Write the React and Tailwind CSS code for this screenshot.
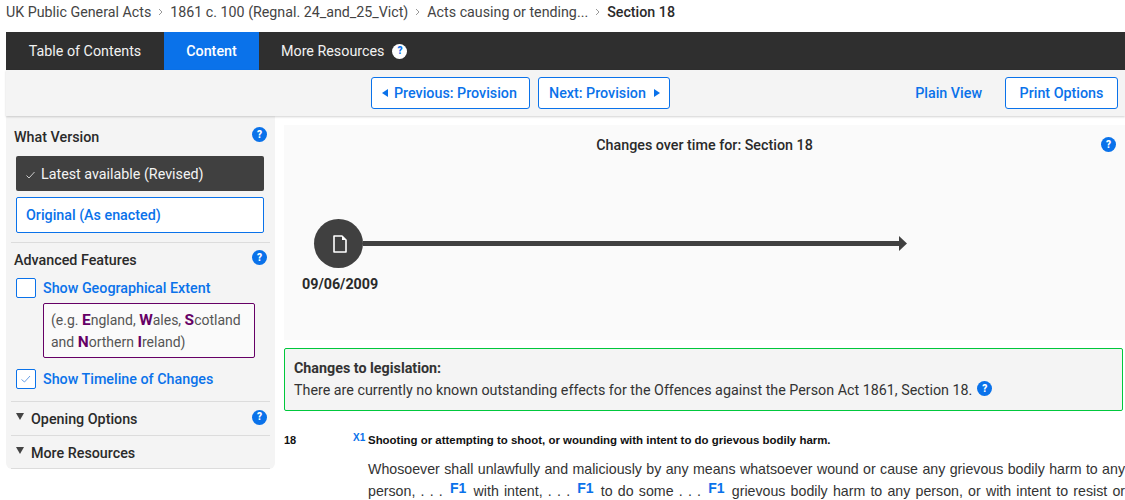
const roboto = { fontFamily: 'Roboto, sans-serif' };

function Help({ className = '', light }) {
    return (
        <span className={`inline-flex items-center justify-center rounded-full w-[15px] h-[15px] text-[10px] font-black leading-none ${light ? 'bg-white text-[#0a72ea]' : 'bg-[#0a72ea] text-white'} ${className}`}>
            ?
        </span>
    );
}

function Crumb({ children, last }) {
    return (
        <>
            <span className={last ? 'text-[#2a2a2a] font-medium' : ''}>{children}</span>
            {!last && (
                <svg width="5" height="8" viewBox="0 0 5 8" className="mx-[7px]">
                    <path d="M1 1l3 3-3 3" fill="none" stroke="#999" strokeWidth="1" />
                </svg>
            )}
        </>
    );
}

function Triangle({ dir }) {
    return (
        <svg width="6" height="8" viewBox="0 0 6 8" className="mt-[-2px]">
            <path d={dir === 'left' ? 'M6 0v8L0 4z' : 'M0 0v8l6-4z'} fill="#0a72ea" />
        </svg>
    );
}

function Divider() {
    return <div className="h-px bg-[#dcdcdc] mx-[5px]" />;
}

function Caret() {
    return (
        <svg width="8" height="7" viewBox="0 0 8 7" className="mr-[7px] relative top-[-3px]">
            <path d="M0 0h8L4 7z" fill="#444" />
        </svg>
    );
}

function Note({ children }) {
    return <span className="font-bold text-[#0a72ea] text-[14px] relative top-[-3px] mx-[2px]">{children}</span>;
}

function Region({ children }) {
    return <b className="text-[#660066] text-[15.5px]">{children}</b>;
}

export default function App() {
    return (
        <div className="h-[500px] w-[1125px] overflow-hidden bg-white text-[#333] text-[14.3px]" style={roboto}>
            {/* Breadcrumb */}
            <div className="h-[32px] pl-[6px] pt-[3px] flex items-start text-[#444] text-[14.25px] leading-[18px]">
                <div className="flex items-center h-[18px]">
                    <Crumb>UK Public General Acts</Crumb>
                    <Crumb>1861 c. 100 (Regnal. 24_and_25_Vict)</Crumb>
                    <Crumb>Acts causing or tending...</Crumb>
                    <Crumb last>Section 18</Crumb>
                </div>
            </div>

            {/* Tabs */}
            <div className="ml-[6px] h-[38px] bg-[#2f2f2f] flex items-stretch text-white">
                <div className="w-[158px] pt-[2px] flex items-center justify-center text-[#f2f2f2]">Table of Contents</div>
                <div className="relative w-[95px] pt-[2px] flex items-center justify-center bg-[#0a72ea] font-medium">
                    Content
                    <span className="absolute left-1/2 -translate-x-1/2 top-full border-x-[5px] border-x-transparent border-t-[5px] border-t-[#0a72ea]" />
                </div>
                <div className="flex items-center pl-[22px] gap-[8px] text-[#f2f2f2]">
                    <span className="pt-[2px]">More Resources</span> <Help light />
                </div>
            </div>

            {/* Toolbar */}
            <div className="ml-[6px] h-[46px] bg-[#f4f4f4] shadow-[0_1px_2px_rgba(0,0,0,0.18)] relative flex items-start pt-[7px] text-[#0a72ea] font-medium">
                <div className="ml-[365px] flex gap-[8px]">
                    <div className="h-[32px] w-[159px] pt-[2px] bg-white border border-[#0a72ea] rounded-[3px] flex items-center pl-[10px] gap-[6px]">
                        <Triangle dir="left" /> Previous: Provision
                    </div>
                    <div className="h-[32px] w-[132px] pt-[2px] bg-white border border-[#0a72ea] rounded-[3px] flex items-center pl-[10px] gap-[8px]">
                        Next: Provision <Triangle dir="right" />
                    </div>
                </div>
                <div className="ml-auto mr-[7px] flex items-center gap-[23px]">
                    <span className="pt-[2px]">Plain View</span>
                    <div className="h-[32px] w-[113px] pt-[2px] bg-white border border-[#0a72ea] rounded-[3px] flex items-center justify-center">Print Options</div>
                </div>
            </div>

            <div className="flex items-start ml-[6px]">
                {/* Sidebar */}
                <div className="w-[269px] h-[353px] bg-[#f4f4f4] rounded-b-[6px] shrink-0 text-[#2a2a2a]">
                    <div className="flex justify-between items-start px-[8px] pt-[11px] h-[40px] font-medium">
                        <span className="leading-[18px] pt-[1px]">What Version</span>
                        <Help />
                    </div>
                    <div className="ml-[10px] mr-[11px] h-[35px] pt-[2px] bg-[#404040] rounded-[2px] text-[#f4f4f4] flex items-center pl-[10px]">
                        <svg width="9" height="8" viewBox="0 0 9 8" className="mr-[6px]">
                            <path d="M0.5 4.5L3 7l5.5-6" fill="none" stroke="#ccc" strokeWidth="1" />
                        </svg>
                        Latest available (Revised)
                    </div>
                    <div className="ml-[10px] mr-[11px] mt-[6px] h-[36px] pt-[2px] bg-white border border-[#0a72ea] rounded-[2px] text-[#0a72ea] font-medium flex items-center pl-[9px]">
                        Original (As enacted)
                    </div>
                    <div className="mt-[9px]"><Divider /></div>
                    <div className="flex justify-between items-start px-[8px] pt-[7px] h-[25px] font-medium">
                        <span className="leading-[18px] pt-[1px]">Advanced Features</span>
                        <Help />
                    </div>
                    <div className="flex items-center ml-[10px] mt-[10px] h-[20px] text-[#0a72ea] font-medium">
                        <span className="w-[20px] h-[20px] bg-white border border-[#0a72ea] rounded-[2px] mr-[7px]" />
                        <span className="pt-[2px]">Show Geographical Extent</span>
                    </div>
                    <div className="ml-[37px] mt-[5px] w-[212px] h-[55px] border border-[#660066] rounded-[2px] bg-[#fafafa] pl-[7px] pt-[5px] leading-[22px] text-[#555] text-[14px]">
                        (e.g. <Region>E</Region>ngland, <Region>W</Region>ales, <Region>S</Region>cotland
                        <br />and <Region>N</Region>orthern <Region>I</Region>reland)
                    </div>
                    <div className="flex items-center ml-[10px] mt-[11px] h-[20px] text-[#0a72ea] font-medium">
                        <span className="w-[20px] h-[20px] bg-white border border-[#0a72ea] rounded-[2px] mr-[7px] flex items-center justify-center">
                            <svg width="10" height="8" viewBox="0 0 10 8">
                                <path d="M0.5 4.5L3.5 7L9 1" fill="none" stroke="#6a9fe6" strokeWidth="1" />
                            </svg>
                        </span>
                        <span className="pt-[2px]">Show Timeline of Changes</span>
                    </div>
                    <div className="mt-[12px]"><Divider /></div>
                    <div className="flex items-center justify-between pl-[10px] pr-[8px] h-[33px] font-medium">
                        <span className="flex items-center pt-[2px]"><Caret />Opening Options</span>
                        <Help className="mt-[-3px]" />
                    </div>
                    <Divider />
                    <div className="flex items-center pl-[10px] pt-[3px] h-[32px] font-medium">
                        <Caret />More Resources
                    </div>
                    <Divider />
                </div>

                {/* Main */}
                <div className="ml-[9px] w-[841px] shrink-0">
                    <div className="mt-[9px] h-[215px] bg-[#fafafa] relative pt-[12px]">
                        <div className="text-center font-medium text-[#2a2a2a] leading-[16px]">Changes over time for: Section 18</div>
                        <Help className="absolute right-[9px] top-[12px] w-[14px] h-[14px]" />
                        <div className="flex items-center ml-[30px] mt-[66px]">
                            <div className="w-[49px] h-[49px] rounded-full bg-[#404040] flex items-center justify-center shrink-0">
                                <svg width="14" height="18" viewBox="0 0 14 18" className="ml-[3px]">
                                    <path d="M1 1h8l4 4v12H1z" fill="none" stroke="#fff" strokeWidth="1.6" strokeLinejoin="round" />
                                    <path d="M9 1l4 4H9z" fill="#fff" />
                                </svg>
                            </div>
                            <div className="w-[536px] h-[5px] bg-[#404040]" />
                            <svg width="8" height="15" viewBox="0 0 8 15"><path d="M0 0l8 7.5L0 15z" fill="#404040" /></svg>
                        </div>
                        <div className="ml-[18px] mt-[6px] font-bold text-[#2a2a2a]">09/06/2009</div>
                    </div>

                    <div className="mt-[8px] w-[839px] h-[63px] border border-[#00c83c] rounded-[2px] bg-[#f4f4f4] pl-[9px] pt-[9px] leading-[22px] text-[#333]">
                        <div className="font-bold leading-[20px]">Changes to legislation:</div>
                        <div className="flex items-center mt-[1px]">
                            There are currently no known outstanding effects for the Offences against the Person Act 1861, Section 18.
                            <Help className="ml-[5px] mt-[-3px] w-[14px] h-[14px]" />
                        </div>
                    </div>

                    <div style={{ fontFamily: '"Liberation Sans", Arial, sans-serif' }}>
                        <div className="flex items-start mt-[21px] h-[18px]">
                            <span className="w-[69px] font-bold text-[11px] text-[#111] leading-[16px]">18</span>
                            <span className="w-[15px] font-bold text-[#0a72ea] text-[10px] leading-[12px]">X1</span>
                            <span className="font-bold text-[11.45px] text-[#111] leading-[16px]">Shooting or attempting to shoot, or wounding with intent to do grievous bodily harm.</span>
                        </div>
                        <div className="ml-[84px] mt-[8px] text-[14.2px] leading-[22px] text-[#333]">
                            <div className="[text-align-last:justify]">Whosoever shall unlawfully and maliciously by any means whatsoever wound or cause any grievous bodily harm to any</div>
                            <div className="[text-align-last:justify]">person, . . . <Note>F1</Note> with intent, . . . <Note>F1</Note> to do some . . . <Note>F1</Note> grievous bodily harm to any person, or with intent to resist or</div>
                        </div>
                    </div>
                </div>
            </div>
        </div>
    );
}
